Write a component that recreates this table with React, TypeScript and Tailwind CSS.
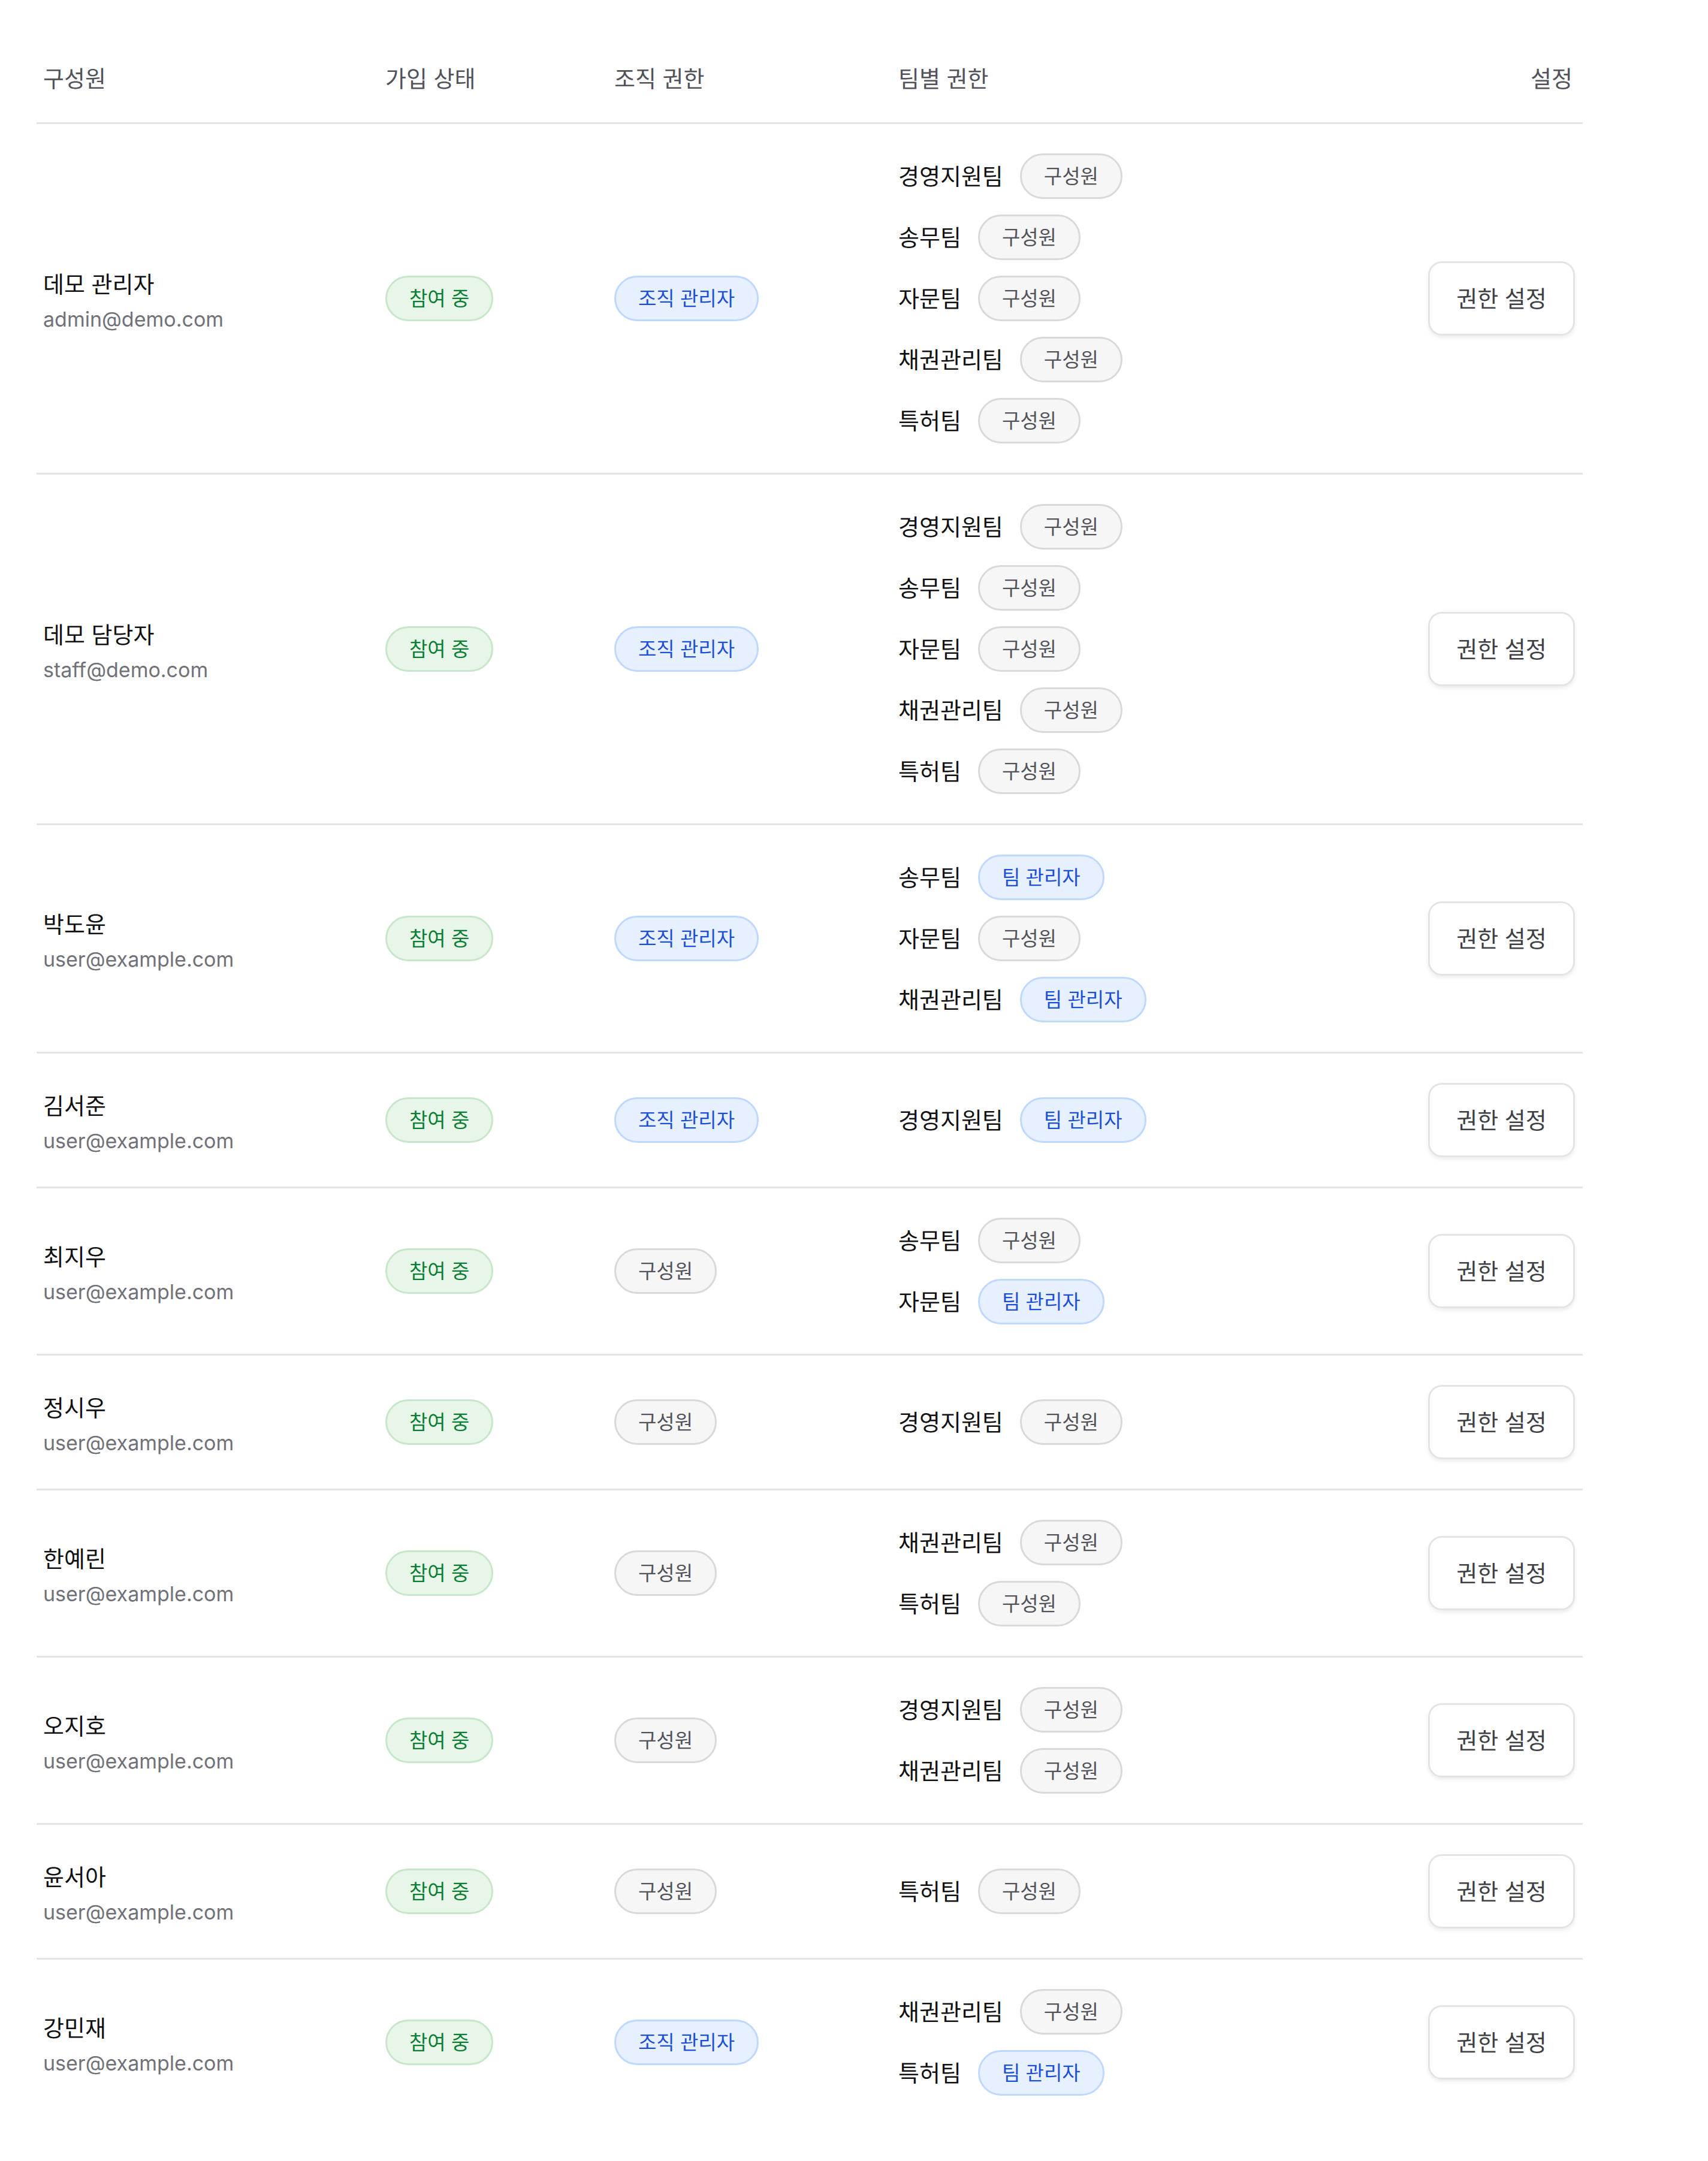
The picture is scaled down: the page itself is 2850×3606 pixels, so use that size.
import React from 'react';

type Tone = 'green' | 'blue' | 'gray';

interface TeamRole {
  team: string;
  role: string;
  tone: Tone;
}

interface Member {
  name: string;
  email: string;
  orgRole: string;
  orgTone: Tone;
  teams: TeamRole[];
}

const FONT = "font-['Inter','Noto_Sans_CJK_KR',sans-serif]";

const toneClass: Record<Tone, string> = {
  green: 'bg-[#e8f5e9] border-[#c8e6c9] text-[#0a7f34]',
  blue: 'bg-[#e6f0ff] border-[#bfd8ff] text-[#1d4ed8]',
  gray: 'bg-[#f6f6f6] border-[#d9d9d9] text-[#52525b]',
};

const member = (team: string): TeamRole => ({ team, role: '구성원', tone: 'gray' });
const lead = (team: string): TeamRole => ({ team, role: '팀 관리자', tone: 'blue' });

const allTeams = ['경영지원팀', '송무팀', '자문팀', '채권관리팀', '특허팀'].map(member);

const members: Member[] = [
  { name: '데모 관리자', email: 'admin@demo.com', orgRole: '조직 관리자', orgTone: 'blue', teams: allTeams },
  { name: '데모 담당자', email: 'staff@demo.com', orgRole: '조직 관리자', orgTone: 'blue', teams: allTeams },
  {
    name: '박도윤',
    email: 'user@example.com',
    orgRole: '조직 관리자',
    orgTone: 'blue',
    teams: [lead('송무팀'), member('자문팀'), lead('채권관리팀')],
  },
  { name: '김서준', email: 'user@example.com', orgRole: '조직 관리자', orgTone: 'blue', teams: [lead('경영지원팀')] },
  { name: '최지우', email: 'user@example.com', orgRole: '구성원', orgTone: 'gray', teams: [member('송무팀'), lead('자문팀')] },
  { name: '정시우', email: 'user@example.com', orgRole: '구성원', orgTone: 'gray', teams: [member('경영지원팀')] },
  { name: '한예린', email: 'user@example.com', orgRole: '구성원', orgTone: 'gray', teams: [member('채권관리팀'), member('특허팀')] },
  { name: '오지호', email: 'user@example.com', orgRole: '구성원', orgTone: 'gray', teams: [member('경영지원팀'), member('채권관리팀')] },
  { name: '윤서아', email: 'user@example.com', orgRole: '구성원', orgTone: 'gray', teams: [member('특허팀')] },
  {
    name: '강민재',
    email: 'user@example.com',
    orgRole: '조직 관리자',
    orgTone: 'blue',
    teams: [member('채권관리팀'), lead('특허팀')],
  },
];

const gridCols = 'grid grid-cols-[571px_382px_474px_1fr_300px] items-center';

function Pill({ tone, children }: { tone: Tone; children: React.ReactNode }) {
  return (
    <span
      className={`inline-flex h-[76px] items-center whitespace-nowrap rounded-full border-[3px] px-[37px] text-[33px] leading-none ${toneClass[tone]}`}
    >
      {children}
    </span>
  );
}

function MemberRow({ m, last }: { m: Member; last: boolean }) {
  return (
    <div className={`${gridCols} py-[49px] ${last ? '' : 'border-b-[3px] border-[#e4e4e7]'}`}>
      <div className="flex flex-col pl-[11px] pt-[6px]">
        <span className="text-[38px] leading-[55px] text-[#111113]">{m.name}</span>
        <span className="mt-[8px] text-[34px] leading-[46px] text-[#71717a]">{m.email}</span>
      </div>
      <div className="pl-[11px]">
        <Pill tone="green">참여 중</Pill>
      </div>
      <div className="pl-[11px]">
        <Pill tone={m.orgTone}>{m.orgRole}</Pill>
      </div>
      <div className="flex flex-col gap-[26px] pl-[11px]">
        {m.teams.map((t) => (
          <div key={t.team} className="flex items-center gap-[28px]">
            <span className="text-[38px] leading-none text-[#111113]">{t.team}</span>
            <Pill tone={t.tone}>{t.role}</Pill>
          </div>
        ))}
      </div>
      <div className="flex justify-end pr-[13px]">
        <button
          type="button"
          className="h-[124px] w-[245px] rounded-[23px] border-[3px] border-[#e4e4e7] bg-white text-[38px] text-[#3f3f46] shadow-[0_4px_6px_rgba(0,0,0,0.07)]"
        >
          권한 설정
        </button>
      </div>
    </div>
  );
}

export default function App() {
  return (
    <div className={`min-h-screen bg-white ${FONT}`}>
      <div className="w-[2580px] pl-[61px] pt-[59px] box-content">
        <div className={`${gridCols} h-[148px] border-b-[3px] border-[#e4e4e7] text-[38px] text-[#52525b]`}>
          <div className="pl-[11px]">구성원</div>
          <div className="pl-[11px]">가입 상태</div>
          <div className="pl-[11px]">조직 권한</div>
          <div className="pl-[11px]">팀별 권한</div>
          <div className="pr-[17px] text-right">설정</div>
        </div>
        {members.map((m, i) => (
          <MemberRow key={m.name} m={m} last={i === members.length - 1} />
        ))}
      </div>
    </div>
  );
}
